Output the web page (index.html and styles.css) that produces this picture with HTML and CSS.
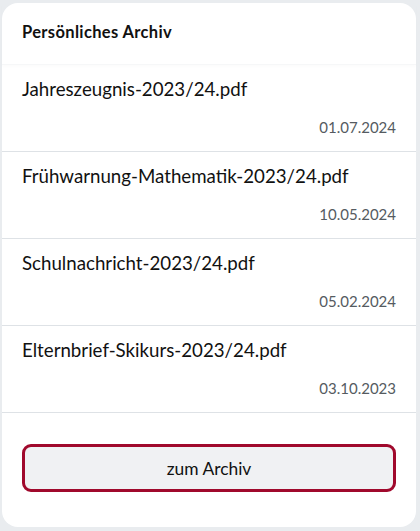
FILE: index.html
```html
<!DOCTYPE html>
<html lang="de">
<head>
<meta charset="utf-8">
<link rel="stylesheet" href="styles.css">
</head>
<body>
<div class="card">
  <div class="card-header">Persönliches Archiv</div>
  <ul class="list">
    <li class="item"><div class="name">Jahreszeugnis-2023/24.pdf</div><div class="date">01.07.2024</div></li>
    <li class="item"><div class="name">Frühwarnung-Mathematik-2023/24.pdf</div><div class="date">10.05.2024</div></li>
    <li class="item"><div class="name">Schulnachricht-2023/24.pdf</div><div class="date">05.02.2024</div></li>
    <li class="item"><div class="name">Elternbrief-Skikurs-2023/24.pdf</div><div class="date">03.10.2023</div></li>
  </ul>
  <div class="footer"><button class="btn">zum Archiv</button></div>
</div>
</body>
</html>
```
FILE: styles.css
```css
html, body { margin: 0; padding: 0; }
body {
  background: #e9ecef;
  font-family: Lato, "Open Sans", sans-serif;
  color: #111;
  width: 420px;
  height: 531px;
  overflow: hidden;
}
.card {
  margin: 3px 4px 0 2px;
  width: 414px;
  height: 524px;
  background: #fff;
  border-radius: 16px;
  box-sizing: border-box;
  display: flex;
  flex-direction: column;
}
.card-header {
  height: 62px;
  box-sizing: border-box;
  padding: 19px 20px 0 20px;
  font-weight: 700;
  font-size: 16.5px;
  letter-spacing: 0.35px;
  border-bottom: 1px solid #f6f7f8;
  box-shadow: 0 2px 3px rgba(0, 0, 0, 0.015);
  position: relative;
}
.list { list-style: none; margin: 0; padding: 0; }
.item {
  height: 87px;
  box-sizing: border-box;
  border-bottom: 1px solid #dee2e6;
  padding: 12px 20px 0 20px;
  display: flex;
  flex-direction: column;
}
.name { font-size: 18.7px; line-height: 24px; }
.date {
  margin-top: 16px;
  text-align: right;
  font-size: 15px;
  color: #555b61;
  line-height: 20px;
}
.footer { padding: 31px 20px 0 20px; }
.btn {
  width: 374px;
  height: 48px;
  border: 3px solid #a0092c;
  border-radius: 9px;
  background: #f0f1f3;
  font-family: inherit;
  font-size: 17.4px;
  color: #111;
}
```
